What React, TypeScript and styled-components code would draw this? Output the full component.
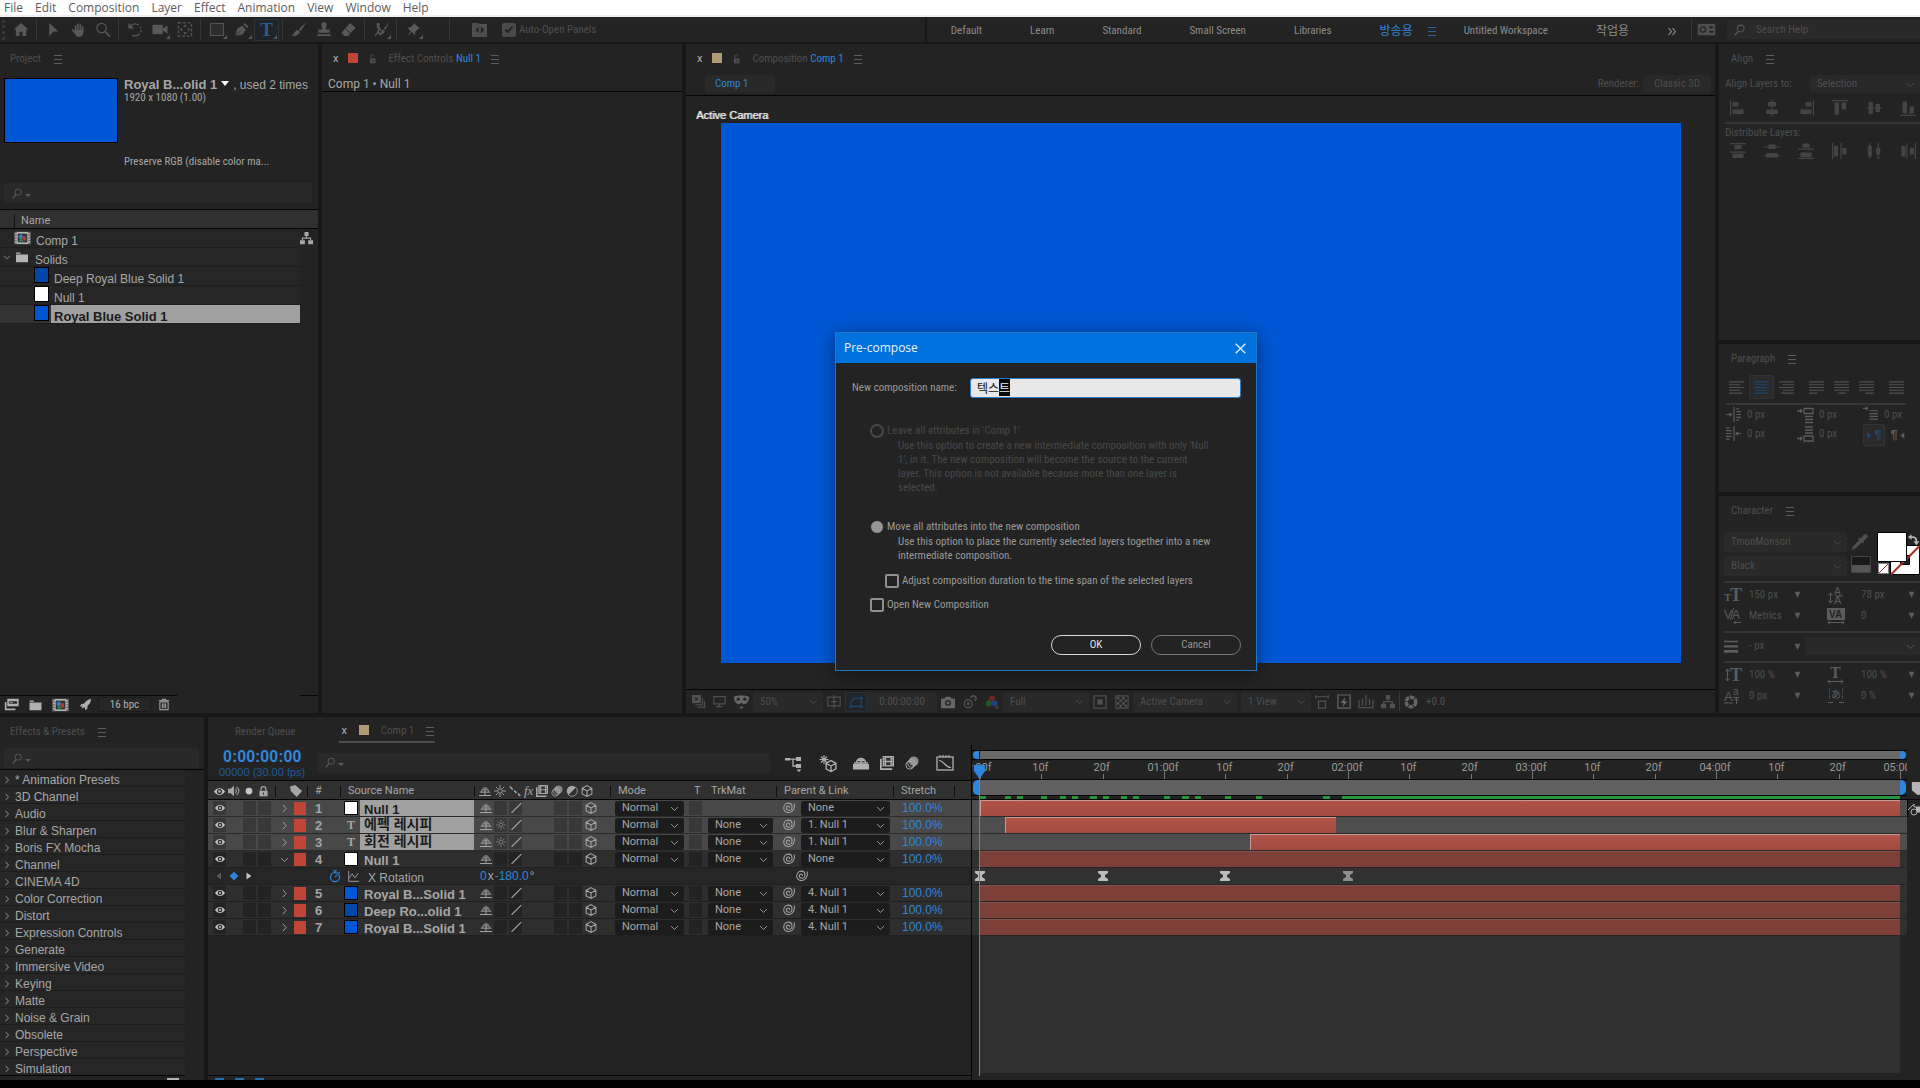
import React, { ReactNode, useEffect, useRef } from 'react';
import styled, { createGlobalStyle, css } from 'styled-components';

/* ---------- tokens ---------- */
const c = {
  panel: '#232323',
  gutter: '#171717',
  line: '#050505',
  field: '#292929',
  header: '#303030',
  text: '#a6a6a6',
  mid: '#8c8c8c',
  dim: '#4e4e4e',
  blue: '#2f86dc',
  deepBlue: '#205a98',
  solid: '#0057d5',
  label: '#bf4536',
};
const condensed = '"Roboto Condensed", Roboto, "Noto Sans CJK KR", sans-serif';
const ui = 'Roboto, "Noto Sans CJK KR", sans-serif';
const arial = '"Liberation Sans", "Noto Sans CJK KR", sans-serif';

const Global = createGlobalStyle`
  *, *::before, *::after { box-sizing: border-box; }
  body { margin: 0; background: #000; color: ${c.text}; font: 11px/14px ${condensed}; overflow: hidden; }
  button, input, select { font: inherit; color: inherit; margin: 0; padding: 0; border: 0; border-radius: 0; background: none; }
  ul { list-style: none; margin: 0; padding: 0; }
  h1, h2, p { margin: 0; font: inherit; }
`;

/* ---------- icons ---------- */
const Svg = styled.svg<{ $c?: string }>`
  display: block;
  flex: none;
  color: ${p => p.$c || 'inherit'};
  fill: currentColor;
  overflow: visible;
`;
const S = (d: string, w = 1) => <path d={d} fill="none" stroke="currentColor" strokeWidth={w} />;
const F = (d: string) => <path d={d} />;

const art: Record<string, ReactNode> = {
  home: F('M8 1l8 7h-2.500v7H9.500v-4.500h-3V15H2.500V8H0z'),
  arrow: F('M4 1l10 9H8.500L4 15z'),
  hand: <>{S('M5.500 9V3.500M8 8V1.500M10.500 8V2.500M13 9V4.500', 1.7)}{F('M4.700 8h9.100v3c0 3-2 5-4.500 5S6 15 5 13L1 8.500l1.200-1.200L4.700 9.500z')}</>,
  zoom: <><circle cx="6.500" cy="6.500" r="5" fill="none" stroke="currentColor" strokeWidth="1.300" />{S('M10 10l5.500 5.500', 1.8)}</>,
  rotate: <><path d="M3 4.500A6.500 6.500 0 0 1 14.500 8 6.500 6.500 0 0 1 5 14" fill="none" stroke="currentColor" strokeWidth="1.300" strokeDasharray="10 2 2 2 2 2" />{F('M1 1v6h6z')}</>,
  camera: <>{F('M0 3h11v10H0z')}{F('M11 7l5-3.500v9L11 9z')}</>,
  pan: <><rect x="1" y="1" width="14" height="14" fill="none" stroke="currentColor" strokeWidth="1.400" strokeDasharray="3 2" />{F('M8 2.500l2 2.500H6zM8 13.500L6 11h4zM2.500 8L5 6v4zM13.500 8L11 10V6z')}</>,
  rect: <rect x="1" y="1.500" width="14" height="13" fill="#2d2d2d" stroke="currentColor" />,
  pen: <>{F('M1 15l2-8 5-3 4 4-3 5zM9.500 2.500L11 1l4 4-1.500 1.500z')}{<path d="M1.500 14.500L6.500 9.500" stroke="#232323" />}</>,
  brush: F('M16 0L8 7.500 10 9.500zM7 8.500L9 10.500C8 14 4 15.500 0 15 3 13.500 3 9 7 8.500z'),
  stamp: F('M8 0a3 3 0 0 1 2.500 4.500L9.500 8H14v3.500H2V8h4.500l-1-3.500A3 3 0 0 1 8 0zM1 13h14v2H1z'),
  eraser: <>{F('M9 1l6 5-8 9H3l-3-3.500z')}<path d="M4.500 7.500l5 4.500" stroke="#232323" /></>,
  roto: <>{S('M4 2v0M3.500 6l2-1.500 1 3 2 2M5.500 7l-1 4-3 4M5 10l2 4', 1.5)}<circle cx="5" cy="2.500" r="1.800" />{F('M17 0l-6 7 1.500 1.500zM10.500 8l1.500 1.500c-1 3-3 4.500-6 4 2-1 2-4.500 4.500-5.500z')}</>,
  pin: F('M9 1l6 6-1.500.5-3 3-.5 3.500-3.500-3.500L1 15.500 5.500 9.500 2 6l3.500-.5 3-3z'),
  panel: <><path d="M0 1h7l1 1h8v14H0z" /><path d="M7 5v7L3.500 8.500zM9.500 5v7L13 8.500z" fill="#232323" /></>,
  guide: <><rect x="-2" y="1" width="20" height="13" /><circle cx="4" cy="7.500" r="3" fill="none" stroke="#232323" strokeWidth="1.500" /><path d="M11 5h5M11 10h5M13 3.500v3M14.500 8.500v3" stroke="#232323" strokeWidth="1.500" /></>,
  unlock: <>{F('M3 7h9v8H3z')}{S('M4.500 7V3.500a2.500 2.500 0 0 1 5 0', 1.5)}<path d="M7 9.500h1.500v3H7z" fill="#232323" /></>,
  lock: <>{F('M2 7h12v8H2z')}{S('M4.500 7V4.500a3.500 3.500 0 0 1 7 0V7', 1.8)}<path d="M7.200 9.500h1.600v3H7.200z" fill="#303030" /></>,
  search: <><circle cx="9" cy="6" r="4.500" fill="none" stroke="currentColor" strokeWidth="1.400" />{S('M6 9.500L1 15', 1.8)}</>,
  tree: <>{F('M5.500 0h5v5h-5zM0 10h6v5H0zM10 10h6v5h-6z')}{S('M8 5v3M3 10V7.500h10V10', 1.4)}</>,
  folder: F('M0 2h6v1.500H0zM0 4.500h16V15H0z'),
  comp: <><rect width="18" height="14" x="-1" y="1" fill="#b4b4b4" /><path d="M.5 1v14M15.500 1v14" stroke="#222" strokeWidth="1.200" strokeDasharray="1.500 1.500" /><rect x="2.500" y="3" width="11" height="10" fill="#333" /><circle cx="6" cy="6.500" r="2.500" fill="#2b82d0" /><rect x="8" y="6" width="4" height="5" fill="#b03a30" /><path d="M6 8l3 4H4z" fill="#2c8f5a" /></>,
  footage: <>{F('M4 1h14v9H4zM1 5h2v8h11v2H1z')}<path d="M6 4h10v3H6z" fill="#232323" />{F('M7 5h4v1H7z')}</>,
  rocket: F('M16 0c-4 0-7 3-9 6L3 7 1 10h4l-2 3 5-2v4l3-2 .5-4C14 7 16 4 16 0z'),
  trash: <>{S('M2.500 4.500h11V15h-11zM1 3h14M5.500 3V1h5v2M5.800 6.500v6.500M8 6.500v6.500M10.200 6.500v6.500', 1.3)}</>,
  eye: <><path d="M0 8c4-6.500 12-6.500 16 0-4 6.500-12 6.500-16 0z" /><circle cx="8" cy="8" r="3.700" fill="#2a2a2a" /><circle cx="8" cy="8" r="1.700" /></>,
  sound: <>{F('M0 5h3.500L8 1v14l-4.500-4H0z')}{S('M10 5c1.500 2 1.500 4 0 6M11.500 2.500c4 3 4 8 0 11', 1.4)}</>,
  dot: <circle cx="8" cy="8" r="4.500" />,
  tag: F('M0 2l7-2 9 8-7 8-8-8z'),
  shy: S('M0 14h16M8 5v9M1 9.500h14M3.500 9c0-7 9-7 9 0M5.500 6.500h5', 1.3),
  sun: <><circle cx="8" cy="8" r="3" fill="none" stroke="currentColor" strokeWidth="1.300" />{S('M8 0v4M8 12v4M0 8h4M12 8h4M2.500 2.500l2.500 2.500M11 11l2.500 2.500M13.500 2.500L11 5M5 11l-2.500 2.500', 1.2)}</>,
  quality: S('M1 2l4 4M7 7.500l3 3M12 11.500l3 3', 2),
  slash: S('M2 14.500L15 1.500', 1.6),
  film: <>{F('M0 3h2v11h12v2H0zM3 0h13v12H3z')}<path d="M5 1v10M14 1v10" stroke="#303030" strokeDasharray="1.500 1.500" /><path d="M7 2h5v3.500H7zM7 7h5v3.500H7z" fill="#303030" /></>,
  blur: <><circle cx="5.500" cy="10.500" r="4.500" fill="none" stroke="currentColor" /><circle cx="7.500" cy="8.500" r="4.500" fill="none" stroke="currentColor" /><circle cx="10" cy="6" r="5.500" opacity=".75" /></>,
  adjust: <><circle cx="8" cy="8" r="7" /><path d="M3 13L13 3a7 7 0 0 1-10 10z" fill="#303030" stroke="currentColor" /></>,
  cube: S('M8 .8l6.500 3.500v7.500L8 15.300 1.500 11.800V4.300zM1.500 4.300L8 8l6.500-3.700M8 8v7.300', 1.4),
  spiral: S('M15 2c1 6-1.500 11.500-7 12C3.500 14.500 1 11.500 1 8s2.500-6.500 6-6.500c3 0 5 2 5 5s-1.700 4.500-4.200 4.500C5.800 11 4.500 9.800 4.500 8S5.700 5.300 7 5.300 9 6.300 8.500 8', 1.4),
  down: S('M2 5.500l6 6 6-6', 1.6),
  right: S('M5 1.500L11 8l-6 6.500', 1.7),
  key: F('M8 1l7 7-7 7-7-7z'),
  prev: F('M12 1v14L3 8z'),
  next: F('M3 1v14l10-7z'),
  watch: <><circle cx="8" cy="9.500" r="6" fill="none" stroke="currentColor" strokeWidth="1.700" />{S('M8 9.500l3-3M5.500 1h5M8 1v2.500M12.500 4l2-1.500', 1.6)}</>,
  graph: S('M1 0v15h15M2 10l4-6 4 6 5-7', 1.3),
  net: <>{F('M0 3h5v2.500H0zM11 2h5v4h-5zM11 9h5v4h-5z')}{S('M5 4.200h6M8 4v7h3', 1.3)}{F('M11.500 14.500h5L14 17z')}</>,
  draft: <>{S('M5 0v9M.5 4.500h9M2 1.500l6 6M8 1.500l-6 6', 1.1)}<g transform="translate(6 5) scale(.75)">{S('M8 .8l6.500 3.500v7.500L8 15.300 1.500 11.800V4.300zM1.500 4.300L8 8l6.500-3.700M8 8v7.300', 1.8)}</g></>,
  hide: <>{F('M0 9h16v5.500H0z')}{S('M8 3v8M1 8h14M3.500 8c0-6 9-6 9 0M5 5.500h6', 1.4)}</>,
  graphEd: <><rect x="0" y="2" width="16" height="13" fill="none" stroke="currentColor" strokeWidth="1.300" />{S('M2 5.500c5 0 6 7 12 7M3 0v2M6 0v2M9 0v2M12 0v2', 1.2)}</>,
  monitor: S('M1 2h14v9H1zM8 11v3M4 14.300h8', 1.4),
  queue: <>{F('M0 0h11v10H0z')}<path d="M4 2.500v5L8 5z" fill="#232323" />{S('M13 4v8H4M15.500 7v8H7', 1.4)}</>,
  mask: <><path d="M0 3c3-2 13-2 16 0 0 6-3 8-5 8-1.500 0-2-1.500-3-1.500S6.500 11 5 11C3 11 0 9 0 3z" /><circle cx="4.500" cy="5.500" r="1.700" fill="#232323" /><circle cx="11.500" cy="5.500" r="1.700" fill="#232323" />{F('M5.500 13.500h5L8 16z')}</>,
  grid: S('M1 2.500h14v10H1zM8 0v15.500M4.500 7.500h7', 1.3),
  shape: <>{S('M2 13V9.500C3 5 6 3.500 9 3.500h5V13z', 1.3)}{F('M.5 11.500h3v3h-3zM12.500 11.500h3v3h-3zM12.500 2h3v3h-3z')}</>,
  photo: <>{F('M0 4h4l1.500-2h5L12 4h4v11H0z')}<circle cx="8" cy="9" r="3.300" fill="#232323" /><circle cx="8" cy="9" r="1.800" /></>,
  snap: <><circle cx="6" cy="10" r="4.500" fill="none" stroke="currentColor" strokeWidth="1.600" /><circle cx="6" cy="10" r="1.700" />{S('M9 3.500a3 3 0 1 1 4.500 3', 2)}</>,
  rgb: <><circle cx="8" cy="4" r="3.500" fill="#6d2622" /><circle cx="4.500" cy="9.500" r="3.500" fill="#23562c" /><circle cx="11" cy="9.500" r="3.500" fill="#24407c" />{F('M11 13.500h5L13.500 16z')}</>,
  roi: <>{S('M1 1h14v14H1z', 1.4)}{F('M5 5h6v6H5z')}</>,
  checker: <>{S('M1 1h14v14H1z', 1.2)}{F('M2 2h3v3H2zM8 2h3v3H8zM5 5h3v3H5zM11 5h3v3h-3zM2 8h3v3H2zM8 8h3v3H8zM5 11h3v3H5zM11 11h3v3h-3z')}</>,
  pixel: <>{S('M4 7h8v8H4zM0 2h16M1 0v4M15 0v4', 1.4)}</>,
  bolt: <>{S('M1 0h14v15H1z', 1.4)}{F('M10 2L4 9h3.500L6 14l6-7H8.500z')}</>,
  chart: <>{S('M0 6v8.500h16V6M4 4v8M8 0v12M12 4v8', 1.5)}</>,
  shutter: <><circle cx="8" cy="8" r="5.500" fill="none" stroke="currentColor" strokeWidth="4" strokeDasharray="5 1" /></>,
  alL: F('M0 0h1.200v16H0zM2.500 2h6v4.500h-6zM2.500 9.500h11V14h-11z'),
  alC: F('M7.400 0h1.200v16H7.400zM4 2h8v4.500H4zM2 9.500h12V14H2z'),
  alR: F('M14.800 0H16v16h-1.200zM7.500 2h6v4.500h-6zM2.500 9.500h11V14h-11z'),
  alT: F('M0 0h16v1.200H0zM2.500 2.500H7v12H2.500zM9.500 2.500H14v7H9.500z'),
  alM: F('M0 7.400h16v1.200H0zM2.500 2H7v12H2.500zM9.500 4H14v8H9.500z'),
  alB: F('M0 14.800h16V16H0zM2.500 1.500H7v12H2.500zM9.500 6.500H14v7H9.500z'),
  diT: F('M0 0h16v1.200H0zM4.500 2h7v4h-7zM0 8.500h16v1.200H0zM2.500 10.500h11v4.500h-11z'),
  diM: F('M0 3.200h16v1.200H0zM4.500 1.500h7v4.500h-7zM0 12h16v1.200H0zM2.500 10h11v4.500h-11z'),
  diB: F('M0 5.500h16v1.200H0zM4.500.5h7v4h-7zM0 14.800h16V16H0zM2.500 9.500h11V14h-11z'),
  diL: F('M0 0h1.200v16H0zM2 3h4v10.500H2zM8.500 0h1.200v16H8.500zM10.500 5h4v6.500h-4z'),
  diC: F('M3.200 0h1.200v16H3.200zM1.800 3h4v10.500h-4zM11.700 0h1.200v16h-1.200zM10.300 5h4v6.500h-4z'),
  diR: F('M6.200 0h1.200v16H6.200zM1.500 3h4v10.500h-4zM14.800 0H16v16h-1.200zM10 5h4v6.500h-4z'),
  txL: S('M0 2h16M0 5h12M0 8h16M0 11h12M0 14h14', 1.1),
  txC: S('M0 2h16M2 5h12M0 8h16M2 11h12M1 14h14', 1.1),
  txR: S('M0 2h16M4 5h12M0 8h16M4 11h12M2 14h14', 1.1),
  txJL: S('M0 2h16M0 5h16M0 8h16M0 11h16M0 14h9', 1.1),
  txJC: S('M0 2h16M0 5h16M0 8h16M0 11h16M4 14h8', 1.1),
  txJR: S('M0 2h16M0 5h16M0 8h16M0 11h16M7 14h9', 1.1),
  txJ: S('M0 2h16M0 5h16M0 8h16M0 11h16M0 14h16', 1.1),
  inL: <>{S('M0 8h5M8.500 0v16M11 2h3M11 5h5M11 8h5M11 11h5M11 14h3', 1.3)}{F('M3.500 5.500L7 8l-3.500 2.500z')}</>,
  inR: <>{S('M16 8h-5M8.500 0v16M0 2h4M0 5h6M0 8h6M0 11h6M0 14h4', 1.3)}{F('M13 5.500L9.500 8l3.500 2.500z')}</>,
  spB: <>{S('M0 4h4M7 1.500h9v5H7zM8 9.500h8M8 12.500h8M8 15.500h8', 1.3)}{F('M3 1.500L6 4 3 6.500z')}</>,
  spA: <>{S('M0 12.500h4M7 10h9v5H7zM8 1h8M8 4h8M8 7h8', 1.3)}{F('M3 10l3 2.500L3 15z')}</>,
  inF: <>{S('M0 1.500h4M7 4h9M7 7h9M7 10h9M7 13h9', 1.3)}{F('M3-1l3 2.500L3 4z')}</>,
  dropper: F('M15 1c1 1 1 3-1 4l-2 2 .5 1-1.500 1.500-1-1L4 14l-3 1.500L.5 15 2 12l5.500-5.500-1-1L8 4l1 .5 2-2c1-2 3-2.500 4-1.500z'),
  swap: <>{S('M4 3h3c4 0 5 2 5 7', 2.4)}{F('M5-1v8L0 3zM8 9h8l-4 6z')}</>,
  strokeW: F('M0 1.500h16v1.500H0zM0 6.500h16V9H0zM0 12h16v3H0z'),
  tri: F('M3 3h10L8 14z'),
  marker: F('M1 0h15v10l-6 6h-2L1 10z'),
  close: S('M1 1l14 14M15 1L1 15', 1.8),
  chevrons: S('M2 2l5 6-5 6M9 2l5 6-5 6', 2),
};

const Icon = ({ n, s = 14, h, color }: { n: string; s?: number; h?: number; color?: string }) => (
  <Svg width={s} height={h || s} viewBox="0 0 16 16" $c={color} aria-hidden="true">{art[n]}</Svg>
);

const BurgerLines = styled.span`
  width: 8px;
  height: 9px;
  flex: none;
  border-top: 1px solid currentColor;
  border-bottom: 1px solid currentColor;
  display: flex;
  align-items: center;
  &::before { content: ''; width: 100%; height: 1px; background: currentColor; }
`;
const IconButton = styled.button<{ $w?: number; $h?: number; $c?: string }>`
  width: ${p => (p.$w ? p.$w + 'px' : 'auto')};
  height: ${p => (p.$h ? p.$h + 'px' : 'auto')};
  color: ${p => p.$c || 'inherit'};
  display: flex;
  align-items: center;
  justify-content: center;
  flex: none;
`;
const Burger = ({ label }: { label: string }) => <IconButton aria-label={label} $c="#5c5c5c"><BurgerLines /></IconButton>;

/* ---------- shared parts ---------- */
const Panel = styled.section`
  background: ${c.panel};
  min-width: 0;
  min-height: 0;
  overflow: hidden;
  display: flex;
  flex-direction: column;
`;
const PanelTabs = styled.header<{ $pad?: number; $gap?: number }>`
  height: 28px;
  flex: none;
  display: flex;
  align-items: center;
  padding-top: 2px;
  padding-left: ${p => p.$pad ?? 10}px;
  gap: ${p => p.$gap ?? 13}px;
  color: ${c.dim};
  white-space: nowrap;
`;
const TabSwatch = styled.span<{ $c: string }>`
  width: 10px;
  height: 10px;
  background: ${p => p.$c};
  flex: none;
  margin-bottom: 2px;
`;
const Accent = styled.span`color: ${c.blue};`;
const Field = styled.label<{ $w?: string; $h?: number }>`
  display: flex;
  align-items: center;
  gap: 2px;
  width: ${p => p.$w || 'auto'};
  height: ${p => p.$h || 20}px;
  padding-left: 8px;
  background: ${c.field};
  color: #5a5a5a;
  border-radius: 2px;
  input { flex: 1; min-width: 0; height: 100%; outline: 0; }
  input::placeholder { color: ${c.dim}; opacity: 1; }
`;
const DropTip = styled.span`
  border: 3px solid transparent;
  border-top-color: currentColor;
  margin-top: 7px;
  width: 0;
  height: 0;
`;
const Search = ({ label, w, h }: { label: string; w?: string; h?: number }) => (
  <Field $w={w} $h={h}>
    <Icon n="search" s={11} /><DropTip />
    <input aria-label={label} />
  </Field>
);

const Drop = styled.span<{ $w?: number; $h: number; $bg: string; $c: string; $pad: number; $font?: string }>`
  position: relative;
  display: flex;
  align-items: center;
  flex: ${p => (p.$w ? 'none' : '1')};
  width: ${p => (p.$w ? p.$w + 'px' : 'auto')};
  min-width: 0;
  height: ${p => p.$h}px;
  background: ${p => p.$bg};
  color: ${p => p.$c};
  border-radius: 2px;
  select {
    appearance: none;
    width: 100%;
    height: 100%;
    padding-left: ${p => p.$pad}px;
    font-family: ${p => p.$font || condensed};
    outline: 0;
  }
  option { color: #ddd; background: #222; }
  svg { position: absolute; right: 5px; pointer-events: none; }
`;
const Select = ({ label, value, options = [], w, h = 18, bg = c.field, color = c.dim, pad = 7, font }: {
  label: string; value: string; options?: string[]; w?: number; h?: number; bg?: string; color?: string; pad?: number; font?: string;
}) => (
  <Drop $w={w} $h={h} $bg={bg} $c={color} $pad={pad} $font={font}>
    <select aria-label={label} defaultValue={value}>
      {[value, ...options].map(o => <option key={o}>{o}</option>)}
    </select>
    <Icon n="down" s={9} />
  </Drop>
);

/* ---------- menu and toolbar ---------- */
const App_ = styled.div`
  height: 100vh;
  display: grid;
  grid-template-rows: 17px 27px minmax(0, 1fr) 367px 8px;
  background: ${c.gutter};
  position: relative;
  overflow: hidden;
`;
const MenuBar = styled.nav`
  background: #fff;
  border-bottom: 2px solid #f0f0f0;
  display: flex;
  align-items: center;
  gap: 12px;
  padding-left: 4px;
  font: 12px/14px "Open Sans", sans-serif;
  color: #5c5c5c;
  button { line-height: 14px; height: 14px; }
`;
const ToolBar = styled.div`
  background: ${c.panel};
  border-bottom: 2px solid ${c.gutter};
  display: flex;
  align-items: center;
  color: ${c.dim};
  white-space: nowrap;
`;
const Tools = styled.div`
  flex: 1;
  min-width: 0;
  display: flex;
  align-items: center;
  align-self: stretch;
  border-right: 2px solid ${c.gutter};
  overflow: hidden;
`;
const Grip = styled.span`
  width: 3px;
  height: 20px;
  margin: 0 3px 0 2px;
  border-left: 3px dotted #363636;
`;
const Tool = styled.button<{ $on?: boolean; $fly?: boolean }>`
  width: 25px;
  height: 22px;
  flex: none;
  position: relative;
  display: flex;
  align-items: center;
  justify-content: center;
  color: ${p => (p.$on ? '#265b8c' : '#585858')};
  ${p => p.$on && css`background: #1f2429; box-shadow: inset 0 0 0 1px #2b333b;`}
  &::after {
    content: '';
    display: ${p => (p.$fly ? 'block' : 'none')};
    position: absolute;
    right: 2px;
    bottom: 2px;
    border: 2px solid;
    border-color: transparent #585858 #585858 transparent;
  }
`;
const Letter = styled.span`font: bold 19px/20px "Liberation Serif", serif;`;
const Sep = styled.span<{ $l?: number; $r?: number }>`
  width: 1px;
  align-self: stretch;
  background: #383838;
  flex: none;
  margin: 2px ${p => p.$r ?? 3}px 2px ${p => p.$l ?? 3}px;
`;
const TickLabel = styled.label`
  display: flex;
  align-items: center;
  gap: 3px;
  margin-left: 15px;
`;
const Tick = styled.input<{ $fill?: boolean }>`
  appearance: none;
  width: 14px;
  height: 14px;
  flex: none;
  border: 2px solid #8f8f8f !important;
  border-radius: 2px !important;
  ${p => p.$fill && css`
    background: #4a4a4a !important;
    border-color: #4a4a4a !important;
    display: grid;
    place-items: center;
    &::before { content: ''; width: 8px; height: 4px; border: solid #232323; border-width: 0 0 2px 2px; transform: rotate(-45deg); margin-top: -2px; }
  `}
`;
const Workspaces = styled.div`
  display: flex;
  align-items: center;
  padding-top: 3px;
  color: ${c.mid};
`;
const Workspace = styled.button<{ $on?: boolean; $kr?: boolean }>`
  padding: 0 ${p => (p.$on ? 11 : 24)}px 0 24px;
  color: ${p => (p.$on ? c.blue : 'inherit')};
  font-size: ${p => (p.$kr ? 12 : 11)}px;
`;
const HelpSearch = styled.div`
  width: 193px;
  margin-left: 13px;
  label { gap: 10px; border-radius: 2px 0 0 2px; padding-left: 7px; }
`;

const toolGroups: { n: string; fly?: boolean; on?: boolean }[][] = [
  [{ n: 'home' }],
  [{ n: 'arrow' }, { n: 'hand' }, { n: 'zoom' }],
  [{ n: 'rotate' }, { n: 'camera', fly: true }, { n: 'pan' }],
  [{ n: 'rect', fly: true }, { n: 'pen', fly: true }, { n: 'type', on: true, fly: true }],
  [{ n: 'brush' }, { n: 'stamp' }, { n: 'eraser' }],
  [{ n: 'roto', fly: true }],
  [{ n: 'pin', fly: true }],
];

const Top = () => (
  <>
    <MenuBar>
      {['File', 'Edit', 'Composition', 'Layer', 'Effect', 'Animation', 'View', 'Window', 'Help'].map(m => <button key={m}>{m}</button>)}
    </MenuBar>
    <ToolBar>
      <Tools>
        <Grip />
        {toolGroups.map((g, i) => (
          <React.Fragment key={i}>
            {i > 0 && <Sep />}
            {g.map(t => (
              <Tool key={t.n} $on={t.on} $fly={t.fly} aria-label={t.n}>
                {t.n === 'type' ? <Letter>T</Letter> : <Icon n={t.n} s={16} h={15} />}
              </Tool>
            ))}
          </React.Fragment>
        ))}
        <Sep $l={24} $r={22} />
        <Icon n="panel" s={15} />
        <TickLabel><Tick type="checkbox" $fill defaultChecked />Auto-Open Panels</TickLabel>
      </Tools>
      <Workspaces>
        {['Default', 'Learn', 'Standard', 'Small Screen', 'Libraries'].map(w => <Workspace key={w}>{w}</Workspace>)}
        <Workspace $on $kr>방송용</Workspace>
        <IconButton aria-label="Workspace menu" $w={16} $c="#28639f"><BurgerLines /></IconButton>
        <Workspace>Untitled Workspace</Workspace>
        <Workspace $kr>작업용</Workspace>
        <IconButton aria-label="More workspaces" $w={38}><Icon n="chevrons" s={12} h={9} /></IconButton>
      </Workspaces>
      <Sep $l={0} $r={7} />
      <Icon n="guide" s={15} h={14} />
      <HelpSearch>
        <Field $h={19}><Icon n="search" s={12} /><input aria-label="Search Help" placeholder="Search Help" /></Field>
      </HelpSearch>
    </ToolBar>
  </>
);

/* ---------- project panel ---------- */
const ProjectInfo = styled.div`
  display: flex;
  gap: 6px;
  height: 111px;
  padding: 6px 0 0 4px;
`;
const Thumb = styled.div`
  width: 114px;
  height: 65px;
  flex: none;
  background: ${c.solid};
  border: 1px solid #000;
`;
const InfoText = styled.div`
  display: flex;
  flex-direction: column;
  height: 91px;
  padding-top: 1px;
  white-space: nowrap;
`;
const InfoTitle = styled.h2`
  display: flex;
  align-items: center;
  gap: 4px;
  height: 12px;
  font: 12px/14px ${arial};
  b { font-size: 13px; }
`;
const WhiteTip = styled.span`
  border: 4px solid transparent;
  border-top: 5px solid #fff;
  border-bottom: 0;
  margin-bottom: 4px;
`;
const LastLine = styled.span`margin-top: auto;`;
const SearchWrap = styled.div<{ $r: number; $b: number; $t?: number }>`
  padding: ${p => p.$t || 0}px ${p => p.$r}px ${p => p.$b}px 4px;
`;
const ListHead = styled.div`
  height: 20px;
  border-top: 1px solid ${c.line};
  border-bottom: 1px solid ${c.line};
  background: ${c.header};
  display: flex;
  align-items: center;
  padding: 3px 0 0 14px;
  font: 11px/14px ${ui};
  span { border-left: 1px solid #111; padding-left: 6px; }
`;
const Tree = styled.ul`
  flex: 1;
  min-height: 0;
  font: 12px/14px ${arial};
`;
const TreeRow = styled.li<{ $depth: number; $on?: boolean }>`
  height: 19px;
  display: flex;
  align-items: stretch;
  margin-right: 18px;
  border-bottom: 1px solid #1d1d1d;
  background: ${p => (p.$on ? '#333' : '#262626')};
  padding-left: ${p => (p.$depth ? 34 : 2)}px;
  gap: 2px;
  > svg, > button { align-self: center; }
`;
const Twisty = styled.span`
  width: 10px;
  display: flex;
  align-items: center;
  justify-content: center;
`;
const Swatch = styled.span<{ $c: string }>`
  width: 15px;
  height: 16px;
  flex: none;
  border: 1px solid #000;
  background: ${p => p.$c};
`;
const TreeName = styled.span<{ $on?: boolean }>`
  flex: 1;
  padding: 5px 0 0 3px;
  line-height: 14px;
  ${p => p.$on && css`background: #a0a0a0; color: #1c1c1c; font-weight: bold; font-size: 13px;`}
`;
const RowEnd = styled.span`
  width: 0;
  align-self: center;
  overflow: visible;
  padding-left: 2px;
`;
const PFoot = styled.footer`
  height: 18px;
  flex: none;
  display: flex;
  justify-content: space-between;
  &::after { content: ''; width: 18px; border-top: 1px solid ${c.line}; }
`;
const PFootTools = styled.div`
  width: 177px;
  border-top: 1px solid ${c.line};
  display: flex;
  align-items: center;
  gap: 10px;
  padding-left: 2px;
  color: #b0b0b0;
`;
const Depth = styled.button`
  width: 53px;
  height: 15px;
  border: 1px solid #1b1b1b;
  background: #262626;
  border-radius: 2px;
  margin: 0 -3px;
  line-height: 12px;
`;

const Project = () => (
  <Panel>
    <PanelTabs>Project<Burger label="Project menu" /></PanelTabs>
    <ProjectInfo>
      <Thumb />
      <InfoText>
        <InfoTitle><b>Royal B...olid 1</b><WhiteTip /><span>, used 2 times</span></InfoTitle>
        <span>1920 x 1080 (1.00)</span>
        <LastLine>Preserve RGB (disable color ma...</LastLine>
      </InfoText>
    </ProjectInfo>
    <SearchWrap $r={6} $b={6}><Search label="Search project" /></SearchWrap>
    <ListHead><span>Name</span></ListHead>
    <Tree>
      <TreeRow $depth={0}><Twisty /><Icon n="comp" s={17} h={14} /><TreeName>Comp 1</TreeName><RowEnd><Icon n="tree" s={13} /></RowEnd></TreeRow>
      <TreeRow $depth={0}><Twisty><Icon n="down" s={8} /></Twisty><Icon n="folder" s={16} h={12} color="#b4b4b4" /><TreeName>Solids</TreeName></TreeRow>
      <TreeRow $depth={1}><Swatch $c="#0047a8" /><TreeName>Deep Royal Blue Solid 1</TreeName></TreeRow>
      <TreeRow $depth={1}><Swatch $c="#fff" /><TreeName>Null 1</TreeName></TreeRow>
      <TreeRow $depth={1} $on><Swatch $c={c.solid} /><TreeName $on>Royal Blue Solid 1</TreeName></TreeRow>
    </Tree>
    <PFoot>
      <PFootTools>
        <IconButton aria-label="Interpret footage"><Icon n="footage" s={17} h={13} /></IconButton>
        <IconButton aria-label="New folder"><Icon n="folder" s={13} h={12} /></IconButton>
        <IconButton aria-label="New composition"><Icon n="comp" s={17} h={14} /></IconButton>
        <IconButton aria-label="Project settings"><Icon n="rocket" s={12} /></IconButton>
        <Depth>16 bpc</Depth>
        <IconButton aria-label="Delete"><Icon n="trash" s={12} h={13} /></IconButton>
      </PFootTools>
    </PFoot>
  </Panel>
);

/* ---------- effect controls / composition ---------- */
const CloseX = styled.button`
  font: 11px/12px ${ui};
  color: #b4b4b4;
`;
const LayerPath = styled.div`
  height: 20px;
  padding: 5px 0 0 6px;
  border-bottom: 1px solid ${c.line};
  font: 12px/14px ${ui};
`;
const EffectControls = () => (
  <Panel>
    <PanelTabs $pad={11} $gap={10}>
      <CloseX>x</CloseX><TabSwatch $c={c.label} /><Icon n="unlock" s={10} h={12} />
      <span>Effect Controls <Accent>Null 1</Accent></span><Burger label="Effect Controls menu" />
    </PanelTabs>
    <LayerPath>Comp 1 • Null 1</LayerPath>
  </Panel>
);

const CompBar = styled.div`
  height: 24px;
  flex: none;
  display: flex;
  align-items: center;
  padding: 0 4px 0 19px;
  gap: 4px;
  border-bottom: 1px solid ${c.line};
  color: ${c.dim};
`;
const Chip = styled.button<{ $w: number; $on?: boolean }>`
  width: ${p => p.$w}px;
  height: 18px;
  background: ${c.field};
  border-radius: 2px;
  color: ${p => (p.$on ? c.blue : c.dim)};
  text-align: ${p => (p.$on ? 'left' : 'center')};
  padding-left: ${p => (p.$on ? 10 : 0)}px;
  margin-right: ${p => (p.$on ? 'auto' : 0)};
`;
const Stage = styled.div`
  flex: 1;
  min-height: 0;
  position: relative;
  display: flex;
  align-items: center;
  justify-content: center;
  overflow: hidden;
`;
const Frame = styled.div`
  width: 960px;
  height: 540px;
  flex: none;
  background: ${c.solid};
`;
const CameraName = styled.span`
  position: absolute;
  left: 10px;
  top: 12px;
  color: #e8e8e8;
  font: 11px/14px ${arial};
  text-shadow: 1px 0 0 #b8b8b8;
`;
const ViewBar = styled.footer`
  height: 24px;
  flex: none;
  display: flex;
  align-items: center;
  gap: 4px;
  padding-left: 6px;
  border-top: 1px solid ${c.line};
  color: #505050;
  white-space: nowrap;
`;
const IconSet = styled.div`
  display: flex;
  align-items: center;
  gap: 8px;
`;
const GuideSet = styled.div`
  display: flex;
  align-items: center;
`;
const Blueish = styled.span`
  width: 22px;
  height: 20px;
  display: flex;
  align-items: center;
  justify-content: center;
  background: #20252b;
  color: #1f446b;
  border: 1px solid #2a3037;
`;
const TimeBox = styled.button`
  width: 70px;
  height: 20px;
  background: ${c.field};
`;
const Composition = () => (
  <Panel>
    <PanelTabs $pad={11} $gap={10}>
      <CloseX>x</CloseX><TabSwatch $c="#b09b76" /><Icon n="unlock" s={10} h={12} />
      <span>Composition <Accent>Comp 1</Accent></span><Burger label="Composition menu" />
    </PanelTabs>
    <CompBar>
      <Chip $w={70} $on>Comp 1</Chip>Renderer:<Chip $w={68}>Classic 3D</Chip>
    </CompBar>
    <Stage><CameraName>Active Camera</CameraName><Frame /></Stage>
    <ViewBar>
      <IconSet><Icon n="queue" s={13} /><Icon n="monitor" s={13} /><Icon n="mask" s={15} color="#666" /></IconSet>
      <Select label="Magnification" value="50%" w={70} h={20} options={['100%']} />
      <Icon n="grid" s={14} />
      <GuideSet><Blueish><Icon n="shape" s={14} /></Blueish><TimeBox>0:00:00:00</TimeBox></GuideSet>
      <IconSet><Icon n="photo" s={14} color="#666" /><Icon n="snap" s={14} /><Icon n="rgb" s={14} /></IconSet>
      <Select label="Resolution" value="Full" w={86} h={20} options={['Half']} />
      <IconSet><Icon n="roi" s={14} /><Icon n="checker" s={14} /></IconSet>
      <Select label="Camera view" value="Active Camera" w={104} h={20} options={['Front']} />
      <Select label="View layout" value="1 View" w={70} h={20} options={['2 Views']} />
      <IconSet><Icon n="pixel" s={14} /><Icon n="bolt" s={14} color="#666" /><Icon n="chart" s={14} /><Icon n="tree" s={14} /></IconSet>
      <Sep $l={0} $r={0} />
      <IconSet><Icon n="shutter" s={14} color="#666" /><span>+0.0</span></IconSet>
    </ViewBar>
  </Panel>
);

/* ---------- right column ---------- */
const RightColumn = styled.div`
  display: grid;
  grid-template-rows: 296px 148px minmax(0, 1fr);
  gap: 4px;
  min-width: 0;
  min-height: 0;
`;
const AlignTo = styled.label`
  display: flex;
  align-items: center;
  padding: 3px 0 0 6px;
  gap: 18px;
  color: ${c.dim};
  white-space: nowrap;
`;
const IconGrid = styled.div`
  display: flex;
  padding: 5px 0 4px 2px;
  color: #444;
`;
const Rule = styled.hr<{ $l?: number; $r?: number }>`
  height: 2px;
  flex: none;
  border: 0;
  background: #363636;
  margin: 0 ${p => p.$r || 0}px 0 ${p => p.$l || 6}px;
`;
const DimLabel = styled.p`
  color: ${c.dim};
  padding: 2px 0 0 6px;
  height: 14px;
`;
const ParaButtons = styled.div`
  display: flex;
  gap: 5px;
  padding: 3px 0 4px 5px;
  color: #505050;
  > div { display: flex; }
`;
const ParaButton = styled.button<{ $on?: boolean }>`
  width: 25px;
  height: 24px;
  display: flex;
  align-items: center;
  justify-content: center;
  ${p => p.$on && css`color: #1f4670; background: #2a2a2a; border: 1px solid #333; border-radius: 2px;`}
`;
const Indents = styled.div`
  display: grid;
  grid-template-columns: 71px 66px 1fr;
  grid-auto-rows: 19px;
  padding-left: 7px;
  color: #5c5c5c;
`;
const Measure = styled.span`
  display: flex;
  align-items: center;
  gap: 6px;
  color: ${c.dim};
  svg { color: #5c5c5c; }
`;
const Directions = styled.span`
  display: flex;
  gap: 2px;
`;
const Pilcrow = styled.button<{ $on?: boolean }>`
  width: 22px;
  height: 22px;
  display: flex;
  align-items: center;
  justify-content: center;
  gap: 1px;
  font: bold 13px/14px ${arial};
  color: ${p => (p.$on ? '#1f4670' : '#5c5c5c')};
  ${p => p.$on && css`background: #2a2a2a; border: 1px solid #333; border-radius: 2px;`}
  svg { color: inherit; }
`;
const CharTop = styled.div`
  display: grid;
  grid-template-columns: 123px 22px 1fr;
  gap: 4px;
  padding: 8px 0 5px 5px;
  > div { display: flex; flex-direction: column; gap: 4px; }
`;
const Duo = styled.span`
  width: 20px;
  height: 17px;
  border: 1px solid #444;
  background: linear-gradient(#1a1a1a 50%, #555 50%);
`;
const CharGrid = styled.div`
  display: grid;
  grid-template-columns: 25px 44px 34px 34px 46px 1fr;
  grid-auto-rows: 21px;
  align-items: center;
  padding: 1px 0 5px 5px;
  color: ${c.dim};
  svg { color: #5c5c5c; }
`;
const StrokeRow = styled.div`
  display: grid;
  grid-template-columns: 25px 44px 12px 1fr;
  align-items: center;
  padding: 4px 0 6px 5px;
  color: ${c.dim};
  svg { color: #5c5c5c; }
`;
const TextGlyph = ({ children }: { children: ReactNode }) => (
  <Svg width={18} height={18} viewBox="0 0 18 18" aria-hidden="true">{children}</Svg>
);
const sansB = { fontFamily: 'Liberation Sans', fontSize: 11 } as const;
const serifB = { fontFamily: 'Liberation Serif', fontWeight: 700 } as const;
const ln = { stroke: 'currentColor', fill: 'none' } as const;

const Right = () => (
  <RightColumn>
    <Panel>
      <PanelTabs $pad={12}>Align<Burger label="Align menu" /></PanelTabs>
      <AlignTo>Align Layers to:<Select label="Align Layers to" value="Selection" options={['Composition']} /></AlignTo>
      <IconGrid>{['alL', 'alC', 'alR', 'alT', 'alM', 'alB'].map(n => <IconButton key={n} $w={34} $h={20} aria-label={n}><Icon n={n} s={16} /></IconButton>)}</IconGrid>
      <Rule />
      <DimLabel>Distribute Layers:</DimLabel>
      <IconGrid>{['diT', 'diM', 'diB', 'diL', 'diC', 'diR'].map(n => <IconButton key={n} $w={34} $h={16} aria-label={n}><Icon n={n} s={16} /></IconButton>)}</IconGrid>
    </Panel>
    <Panel>
      <PanelTabs $pad={12}>Paragraph<Burger label="Paragraph menu" /></PanelTabs>
      <ParaButtons>
        <div><ParaButton aria-label="Left"><Icon n="txL" s={15} /></ParaButton><ParaButton $on aria-label="Center"><Icon n="txC" s={15} /></ParaButton><ParaButton aria-label="Right"><Icon n="txR" s={15} /></ParaButton></div>
        <div>{['txJL', 'txJC', 'txJR'].map(n => <ParaButton key={n} aria-label={n}><Icon n={n} s={15} /></ParaButton>)}</div>
        <div><ParaButton aria-label="Justify all"><Icon n="txJ" s={15} /></ParaButton></div>
      </ParaButtons>
      <Rule $l={7} $r={14} />
      <Indents>
        <Measure><Icon n="inL" s={15} />0 px</Measure><Measure><Icon n="spB" s={16} />0 px</Measure><Measure><Icon n="inF" s={15} />0 px</Measure>
        <Measure><Icon n="inR" s={15} />0 px</Measure><Measure><Icon n="spA" s={16} />0 px</Measure>
        <Directions><Pilcrow $on aria-label="Left to right"><Icon n="next" s={7} h={9} />¶</Pilcrow><Pilcrow aria-label="Right to left">¶<Icon n="prev" s={7} h={9} /></Pilcrow></Directions>
      </Indents>
    </Panel>
    <Panel>
      <PanelTabs $pad={12}>Character<Burger label="Character menu" /></PanelTabs>
      <CharTop>
        <div>
          <Drop $h={20} $bg={c.field} $c={c.dim} $pad={7}><select aria-label="Font family"><option>TmonMonsori</option></select><Icon n="down" s={9} /></Drop>
          <Drop $h={20} $bg={c.field} $c={c.dim} $pad={7}><select aria-label="Font style"><option>Black</option></select><Icon n="down" s={9} /></Drop>
        </div>
        <div><Icon n="dropper" s={17} h={20} color={c.dim} /><Duo /></div>
        <Svg width={44} height={44} viewBox="0 0 44 44" aria-hidden="true">
          <path d="M13.500 13.500h29v29h-29z" fill="#fff" stroke="#000" />
          <path d="M23.500 23.500h9v9h-9z" fill="#232323" stroke="#000" />
          <path d="M14 42.500L42.500 14" stroke="#a82c20" strokeWidth="2" />
          <path d="M.5.5h29v29H.5z" fill="#fff" stroke="#000" />
          <path d="M1.500 31.500h10v10h-10z" fill="#fff" stroke="#888" />
          <path d="M2 41L11 32" stroke="#a82c20" />
          <g transform="translate(31 3) scale(.7)" color="#b4b4b4" fill="#b4b4b4">{art.swap}</g>
        </Svg>
      </CharTop>
      <Rule $l={5} />
      <CharGrid>
        <TextGlyph><text x="0" y="15" {...serifB} fontSize="11">T</text><text x="6" y="15" {...serifB} fontSize="18">T</text></TextGlyph>
        <span>150 px</span><Icon n="tri" s={9} />
        <TextGlyph><text x="7" y="9" {...sansB} fontSize="10">A</text><text x="7" y="18" {...sansB}>A</text><path {...ln} d="M3.500 7v10M1.500 9.500l2-2.500 2 2.500M1.500 14.500l2 2.500 2-2.500M8 10h8" /></TextGlyph>
        <span>78 px</span><Icon n="tri" s={9} />
        <TextGlyph><text x="0" y="12" {...sansB} fontSize="12">V</text><text x="8" y="12" {...sansB} fontSize="12">A</text><path {...ln} d="M9.500 1l-3 12M10 15.500h7M12 13.500l-2 2 2 2" /></TextGlyph>
        <span>Metrics</span><Icon n="tri" s={9} />
        <TextGlyph><path d="M0 1h18v12H0z" /><text x="2" y="11" {...sansB} fontWeight="700" fontSize="10" fill="#232323">VA</text><path {...ln} d="M1 15.500h16M3 13.500l-2 2 2 2M15 13.500l2 2-2 2" /></TextGlyph>
        <span>0</span><Icon n="tri" s={9} />
      </CharGrid>
      <Rule $l={5} />
      <StrokeRow><Icon n="strokeW" s={14} h={15} /><span>- px</span><Icon n="tri" s={9} /><Select label="Stroke order" value=" " options={['Fill Over Stroke']} /></StrokeRow>
      <Rule $l={5} />
      <CharGrid>
        <TextGlyph><text x="6" y="15" {...serifB} fontSize="18">T</text><path {...ln} d="M3.500 3v12M1.500 5.500l2-2.500 2 2.500M1.500 12.500l2 2.500 2-2.500" /></TextGlyph>
        <span>100 %</span><Icon n="tri" s={9} />
        <TextGlyph><text x="3" y="12" {...serifB} fontSize="16">T</text><path {...ln} d="M1 15.500h15M3 13.500l-2 2 2 2M14 13.500l2 2-2 2" /></TextGlyph>
        <span>100 %</span><Icon n="tri" s={9} />
        <TextGlyph><text x="0" y="14" {...sansB} fontSize="13">A</text><text x="9" y="8" {...sansB} fontSize="10">a</text><path {...ln} d="M0 16h9M9 10.500h6M12.500 11v6M10.500 13.500l2-2 2 2" /></TextGlyph>
        <span>0 px</span><Icon n="tri" s={9} />
        <TextGlyph><text x="4" y="11" fontFamily="Noto Sans CJK JP" fontSize="10">あ</text><path {...ln} strokeDasharray="1 1" d="M2.500 1v12M15.500 1v12" /><path {...ln} d="M1 15.500h5M12 15.500h5" /></TextGlyph>
        <span>0 %</span><Icon n="tri" s={9} />
      </CharGrid>
    </Panel>
  </RightColumn>
);

/* ---------- effects & presets ---------- */
const EffectList = styled.ul`
  flex: 1;
  min-height: 0;
  overflow: hidden;
  border-top: 1px solid ${c.line};
  font: 12px/14px ${arial};
`;
const EffectRow = styled.li`
  height: 17px;
  margin-right: 19px;
  background: #262626;
  border-bottom: 1px solid #1c1c1c;
  button { display: flex; align-items: center; gap: 4px; padding: 3px 0 0 3px; white-space: nowrap; }
`;
const EffectFoot = styled.footer`
  height: 5px;
  width: 185px;
  flex: none;
  border-top: 1px solid ${c.line};
  padding: 2px 6px 0 0;
  display: flex;
  justify-content: flex-end;
  span { width: 12px; background: #b4b4b4; }
`;
const effects = ['* Animation Presets', '3D Channel', 'Audio', 'Blur & Sharpen', 'Boris FX Mocha', 'Channel', 'CINEMA 4D', 'Color Correction', 'Distort', 'Expression Controls', 'Generate', 'Immersive Video', 'Keying', 'Matte', 'Noise & Grain', 'Obsolete', 'Perspective', 'Simulation'];
const Effects = () => (
  <Panel>
    <PanelTabs>Effects &amp; Presets<Burger label="Effects menu" /></PanelTabs>
    <SearchWrap $t={3} $r={5} $b={1}><Search label="Search effects" /></SearchWrap>
    <EffectList>{effects.map(e => <EffectRow key={e}><button><Icon n="right" s={8} />{e}</button></EffectRow>)}</EffectList>
    <EffectFoot><span /></EffectFoot>
  </Panel>
);

/* ---------- timeline ---------- */
const TimeTabs = styled(PanelTabs)`
  padding-left: 27px;
  gap: 44px;
`;
const OpenTab = styled.div`
  display: flex;
  align-items: center;
  align-self: stretch;
  gap: 12px;
  padding: 2px 1px 0 2px;
  border-bottom: 2px solid #4d4d4d;
  margin-bottom: 2px;
`;
const TimeBody = styled.div`
  flex: 1;
  min-height: 0;
  display: flex;
`;
const LayerSide = styled.div`
  width: 763px;
  flex: none;
  display: flex;
  flex-direction: column;
`;
const TimeCtl = styled.div`
  height: 35px;
  flex: none;
  display: flex;
  align-items: center;
  padding-left: 11px;
`;
const TimeCode = styled.div`
  width: 98px;
  color: ${c.blue};
  font: bold 16px/18px ${arial};
  padding-left: 4px;
  small { display: block; margin-left: -4px; font: 11px/12px ${arial}; color: ${c.deepBlue}; white-space: nowrap; }
`;
const CtlIcons = styled.div<{ $gap: number; $pad?: number }>`
  display: flex;
  gap: ${p => p.$gap}px;
  padding-left: ${p => p.$pad || 0}px;
  align-items: center;
  color: #b0b0b0;
`;
const LayerTable = styled.table`
  table-layout: fixed;
  width: 763px;
  border-collapse: separate;
  border-spacing: 0;
  border-top: 1px solid ${c.line};
  font: 11px/14px ${ui};
  th, td { padding: 0; text-align: left; font-weight: normal; }
  th { height: 19px; background: ${c.header}; border-bottom: 1px solid ${c.line}; }
`;
const HeadCell = styled.div<{ $pad?: number; $gap?: number; $div?: boolean }>`
  height: 18px;
  display: flex;
  align-items: center;
  padding-top: 2px;
  padding-left: ${p => p.$pad ?? 6}px;
  gap: ${p => p.$gap || 0}px;
  white-space: nowrap;
  position: relative;
  &::after {
    content: '';
    display: ${p => (p.$div === false ? 'none' : 'block')};
    position: absolute;
    right: 1px;
    height: 11px;
    border-right: 1px solid #0e0e0e;
  }
`;
const Row = styled.tr<{ $kind: 'on' | 'off' | 'prop' }>`
  td {
    height: 17px;
    border-bottom: 1px solid ${p => (p.$kind === 'on' ? '#2a2a2a' : '#1f1f1f')};
    background: ${p => ({ on: '#484848', off: '#2e2e2e', prop: '#262626' }[p.$kind])};
  }
`;
const Cell = styled.div<{ $pad?: number; $gap?: number }>`
  height: 16px;
  display: flex;
  align-items: center;
  padding-left: ${p => p.$pad ?? 0}px;
  gap: ${p => p.$gap || 0}px;
  white-space: nowrap;
`;
const Box = styled.span<{ $clear?: boolean }>`
  width: 13px;
  height: 14px;
  display: flex;
  align-items: center;
  justify-content: center;
  background: ${p => (p.$clear ? 'none' : '#00000038')};
`;
const LabelChip = styled.button`
  width: 12px;
  height: 13px;
  background: ${c.label};
`;
const Num = styled.b`
  font: bold 13px/16px ${arial};
  padding-top: 1px;
`;
const SrcIcon = styled.span<{ $c?: string }>`
  width: 14px;
  height: 14px;
  flex: none;
  margin: 0 2px;
  text-align: center;
  font: bold 12px/14px "Liberation Serif", serif;
  ${p => p.$c && css`background: ${p.$c}; box-shadow: inset 0 0 0 1px #000;`}
`;
const LayerName = styled.span<{ $on?: boolean; $kr?: boolean }>`
  flex: 1;
  height: 16px;
  overflow: hidden;
  padding-left: 4px;
  margin-right: 2px;
  font: bold ${p => (p.$kr ? 14 : 13)}px/${p => (p.$kr ? 14 : 19)}px ${arial};
  ${p => p.$on && css`background: #a0a0a0; color: #1c1c1c;`}
`;
const HotText = styled.span`
  color: ${c.blue};
  font: 12px/16px ${arial};
  i { color: ${c.text}; font-style: normal; padding: 0 1px; }
`;
const Fx = styled.i`font: italic 13px/14px "Liberation Serif", serif;`;
const PropName = styled.span`font: 12px/16px ${arial}; padding-top: 3px;`;

type Layer = { id: number; name: string; src?: string; on?: boolean; kr?: boolean; open?: boolean; trk?: boolean; parent: string; from: number; to: number };
const layers: Layer[] = [
  { id: 1, name: 'Null 1', src: '#fff', on: true, parent: 'None', from: 0, to: 150 },
  { id: 2, name: '에펙 레시피', kr: true, on: true, trk: true, parent: '1. Null 1', from: 4, to: 58 },
  { id: 3, name: '회전 레시피', kr: true, on: true, trk: true, parent: '1. Null 1', from: 44, to: 150 },
  { id: 4, name: 'Null 1', src: '#fff', open: true, trk: true, parent: 'None', from: 0, to: 150 },
  { id: 5, name: 'Royal B...Solid 1', src: c.solid, trk: true, parent: '4. Null 1', from: 0, to: 150 },
  { id: 6, name: 'Deep Ro...olid 1', src: '#0047a8', trk: true, parent: '4. Null 1', from: 0, to: 150 },
  { id: 7, name: 'Royal B...Solid 1', src: c.solid, trk: true, parent: '4. Null 1', from: 0, to: 150 },
];
const widths = [69, 32, 33, 134, 136, 74, 19, 73, 117, 61, 15];
const dark = '#1c1c1c';

const LayerRow = ({ l }: { l: Layer }) => (
  <Row $kind={l.on ? 'on' : 'off'}>
    <td><Cell $pad={5} $gap={2}><Box><Icon n="eye" s={10} color="#c4c4c4" /></Box><Box $clear /><Box /><Box /></Cell></td>
    <td><Cell $pad={3} $gap={5}><Icon n={l.open ? 'down' : 'right'} s={9} /><LabelChip aria-label="Label colour" /></Cell></td>
    <td><Cell $pad={6}><Num>{l.id}</Num></Cell></td>
    <td><Cell><SrcIcon $c={l.src}>{l.src ? '' : 'T'}</SrcIcon><LayerName $on={l.on} $kr={l.kr}>{l.name}</LayerName></Cell></td>
    <td>
      <Cell $pad={3} $gap={2}>
        <Box $clear><Icon n="shy" s={12} /></Box><Box>{l.kr && <Icon n="sun" s={10} color="#858585" />}</Box><Box><Icon n="slash" s={12} /></Box>
        <Box $clear /><Box $clear /><Box /><Box /><Box $clear><Icon n="cube" s={12} /></Box>
      </Cell>
    </td>
    <td><Cell $pad={3}><Select label={`Mode ${l.id}`} value="Normal" options={['Add', 'Screen']} w={69} h={15} bg={dark} color={c.text} font={ui} /></Cell></td>
    <td><Cell $pad={3}><Box /></Cell></td>
    <td><Cell $pad={3}>{l.trk && <Select label={`Track matte ${l.id}`} value="None" options={['Alpha Matte']} w={65} h={15} bg={dark} color={c.text} font={ui} />}</Cell></td>
    <td><Cell $pad={5} $gap={6}><Icon n="spiral" s={12} /><Select label={`Parent ${l.id}`} value={l.parent} options={['Parent layer']} w={89} h={15} bg={dark} color={c.text} font={ui} /></Cell></td>
    <td><Cell $pad={7}><HotText>100.0%</HotText></Cell></td>
    <td />
  </Row>
);
const PropRow = () => (
  <Row $kind="prop">
    <td><Cell $pad={7} $gap={6}><Icon n="prev" s={8} color="#5a5a5a" /><Icon n="key" s={10} color={c.blue} /><Icon n="next" s={8} color="#c4c4c4" /></Cell></td>
    <td />
    <td><Cell $pad={20}><Icon n="watch" s={12} color={c.blue} /></Cell></td>
    <td><Cell $pad={6} $gap={9}><Icon n="graph" s={11} /><PropName>X Rotation</PropName></Cell></td>
    <td><Cell $pad={4}><HotText>0<i>x</i>-180.0<i>°</i></HotText></Cell></td>
    <td /><td /><td />
    <td><Cell $pad={18}><Icon n="spiral" s={12} /></Cell></td>
    <td /><td />
  </Row>
);
const LayerFoot = styled.footer`
  height: 5px;
  margin-top: auto;
  border-top: 1px solid ${c.line};
  display: flex;
  gap: 11px;
  padding: 2px 0 0 7px;
  span { width: 9px; height: 2px; background: #1f6fb8; }
`;

const Graph = styled.div`
  flex: 1;
  min-width: 0;
  position: relative;
  border-left: 1px solid ${c.line};
  padding-top: 5px;
  display: flex;
  flex-direction: column;
`;
const Strip = styled.div<{ $h: number; $bg: string }>`
  height: ${p => p.$h}px;
  flex: none;
  padding: 0 7px 0 8px;
  border-bottom: 1px solid ${c.line};
  display: flex;
  position: relative;
  > i { flex: 1; background: ${p => p.$bg}; }
`;
const NavStrip = styled(Strip)`border-top: 1px solid ${c.line};`;
const Handle = styled.span<{ $end?: boolean }>`
  position: absolute;
  width: 6px;
  top: 0;
  bottom: 0;
  background: ${c.blue};
  ${p => (p.$end ? 'right: 1px; border-radius: 0 5px 5px 0;' : 'left: 1px; border-radius: 5px 0 0 5px;')}
`;
const Ruler = styled.div`
  height: 20px;
  flex: none;
  padding: 0 7px 0 8px;
  border-bottom: 1px solid ${c.line};
  overflow: hidden;
  font: 11px/16px ${ui};
  color: #999;
`;
const Lane = styled.div`
  position: relative;
  height: 100%;
`;
const Mark = styled.span<{ $major?: boolean }>`
  position: absolute;
  top: 0;
  width: 60px;
  height: 100%;
  margin-left: -30px;
  padding-right: 2px;
  text-align: center;
  &::after {
    content: '';
    position: absolute;
    left: 30px;
    bottom: 0;
    width: 1px;
    height: ${p => (p.$major ? 8 : 5)}px;
    background: #777;
  }
`;
const Cached = styled.span`
  position: absolute;
  top: 0;
  bottom: 0;
  background: #28963a;
`;
const TrackRow = styled.div<{ $kind: 'on' | 'off' | 'prop' }>`
  height: 17px;
  flex: none;
  padding: 0 7px 0 8px;
  border-bottom: 1px solid ${p => (p.$kind === 'on' ? '#2a2a2a' : '#252525')};
  background: ${p => ({ on: '#4e4e4e', off: '#303030', prop: '#323232' }[p.$kind])};
`;
const Bar = styled.span<{ $on?: boolean }>`
  position: absolute;
  top: 0;
  bottom: 0;
  ${p => (p.$on
    ? css`background: linear-gradient(#b25449, #a24a41); border-top: 1px solid #c59c94; border-left: 1px solid #c59c94;`
    : css`background: #7c4038; box-shadow: inset 0 1px #84504a;`)}
`;
const KeyMark = styled.span<{ $end?: boolean }>`
  position: absolute;
  top: 3px;
  margin-left: -5px;
  width: 10px;
  height: 10px;
  color: ${p => (p.$end ? '#8f8f8f' : '#bcbcbc')};
`;
const EmptyTime = styled.div`
  flex: 1;
  margin: 0 7px 7px 8px;
  background: #303030;
`;
const Playhead = styled.div`
  position: absolute;
  left: 2px;
  top: 20px;
  bottom: 4px;
  width: 11px;
  display: flex;
  flex-direction: column;
  align-items: center;
  &::after { content: ''; flex: 1; width: 1px; background: #3f8fdd; }
`;
const EdgeStrip = styled.div`
  width: 13px;
  flex: none;
  color: #b4b4b4;
  padding: 37px 0 0 4px;
  overflow: hidden;
`;
const EdgeSecond = styled.div`
  margin: 4px 0 0 -4px;
  border-top: 1px solid ${c.line};
  border-left: 1px solid ${c.line};
  height: 18px;
  padding-top: 4px;
`;

const at = (f: number) => ({ left: `${(f / 150) * 100}%` });
const span = (a: number, b: number) => ({ left: `${(a / 150) * 100}%`, width: `${((b - a) / 150) * 100}%` });
const cached = [0, 4, 6, 10, 13, 15, 18, 20, 23, 25, 30, 33, 35, 40, 45, 56];
const marks = Array.from({ length: 16 }, (_, i) => i * 10);
const markText = (f: number) => (f === 0 ? '0:00f' : f % 30 === 0 ? `0${f / 30}:00f` : `${f % 30}f`);

const Timeline = () => (
  <Panel>
    <TimeTabs>
      <span>Render Queue</span>
      <OpenTab><CloseX>x</CloseX><TabSwatch $c="#b09b76" /><span>Comp 1</span><Burger label="Timeline menu" /></OpenTab>
    </TimeTabs>
    <TimeBody>
      <LayerSide>
        <TimeCtl>
          <TimeCode>0:00:00:00<small>00000 (30.00 fps)</small></TimeCode>
          <Search label="Search layers" w="453px" />
          <CtlIcons $gap={18} $pad={15}>
            <Icon n="net" s={16} /><Icon n="draft" s={16} />
            <CtlIcons $gap={11}><Icon n="hide" s={16} /><Icon n="film" s={14} /><Icon n="blur" s={14} /></CtlIcons>
            <Icon n="graphEd" s={16} />
          </CtlIcons>
        </TimeCtl>
        <LayerTable>
          <colgroup>{widths.map((w, i) => <col key={i} style={{ width: w }} />)}</colgroup>
          <thead>
            <tr>
              <th><HeadCell $pad={6} $gap={3}><Icon n="eye" s={11} color="#c4c4c4" /><Icon n="sound" s={12} /><Icon n="dot" s={12} color="#c4c4c4" /><Icon n="lock" s={11} /></HeadCell></th>
              <th><HeadCell $pad={13}><Icon n="tag" s={12} /></HeadCell></th>
              <th><HeadCell>#</HeadCell></th>
              <th><HeadCell>Source Name</HeadCell></th>
              <th><HeadCell $pad={3} $gap={3}>{['shy', 'sun', 'quality'].map(n => <Icon key={n} n={n} s={12} />)}<Fx>fx</Fx>{['film', 'blur', 'adjust', 'cube'].map(n => <Icon key={n} n={n} s={12} />)}</HeadCell></th>
              <th><HeadCell $div={false}>Mode</HeadCell></th>
              <th><HeadCell $div={false} $pad={8}>T</HeadCell></th>
              <th><HeadCell>TrkMat</HeadCell></th>
              <th><HeadCell>Parent &amp; Link</HeadCell></th>
              <th><HeadCell>Stretch</HeadCell></th>
              <th />
            </tr>
          </thead>
          <tbody>
            {layers.map(l => <React.Fragment key={l.id}><LayerRow l={l} />{l.open && <PropRow />}</React.Fragment>)}
          </tbody>
        </LayerTable>
        <LayerFoot><span /><span /><span /></LayerFoot>
      </LayerSide>
      <Graph>
        <NavStrip $h={10} $bg="#696969"><i /><Handle /><Handle $end /></NavStrip>
        <Ruler><Lane>{marks.map(f => <Mark key={f} $major={f % 30 === 0} style={at(f)}>{markText(f)}</Mark>)}</Lane></Ruler>
        <Strip $h={16} $bg="#606060"><i /><Handle /><Handle $end /></Strip>
        <Strip $h={4} $bg="transparent"><i><Lane>{cached.map(f => <Cached key={f} style={span(f, f + 1)} />)}<Cached style={span(59, 150)} /></Lane></i></Strip>
        {layers.map(l => (
          <React.Fragment key={l.id}>
            <TrackRow $kind={l.on ? 'on' : 'off'}><Lane><Bar $on={l.on} style={span(l.from, l.to)} /></Lane></TrackRow>
            {l.open && (
              <TrackRow $kind="prop">
                <Lane>{[0, 20, 40, 60].map(f => <KeyMark key={f} $end={f === 60} style={at(f)}><Svg width={10} height={10} viewBox="0 0 10 10"><path d="M0 0h10v2L7 4v2l3 2v2H0V8l3-2V4L0 2z" /></Svg></KeyMark>)}</Lane>
              </TrackRow>
            )}
          </React.Fragment>
        ))}
        <EmptyTime />
        <Playhead><Svg width={11} height={14} viewBox="0 0 11 14" $c={c.blue}><path d="M0 0h11v6L5.500 14 0 6z" /></Svg></Playhead>
      </Graph>
      <EdgeStrip>
        <Icon n="marker" s={13} />
        <EdgeSecond><Svg width={14} height={11} viewBox="0 0 14 11"><path d="M0 6l6-6v3h8v5H6" fill="none" stroke="currentColor" /><path d="M8 3h6v5H8z" /><circle cx="6" cy="8" r="3" fill="#232323" stroke="currentColor" /></Svg></EdgeSecond>
      </EdgeStrip>
    </TimeBody>
  </Panel>
);

/* ---------- dialog ---------- */
const Dialog = styled.form`
  position: absolute;
  left: calc(50% - 125px);
  top: 332px;
  width: 422px;
  background: ${c.panel};
  border: 1px solid #2277c4;
  box-shadow: 0 3px 16px rgba(0, 0, 0, 0.45);
  color: #9a9a9a;
`;
const DialogTitle = styled.header`
  height: 30px;
  background: #0072de;
  color: #e9f3ff;
  display: flex;
  align-items: center;
  justify-content: space-between;
  padding: 0 10px 0 8px;
  font: 12px/16px "Open Sans", sans-serif;
`;
const NameRow = styled.label`
  display: flex;
  align-items: center;
  justify-content: space-between;
  padding: 15px 15px 0 16px;
  input {
    width: 271px;
    height: 20px;
    background: #e8e8e8;
    border: 1px solid #2d7cc9;
    border-radius: 3px;
    color: #111;
    padding: 0 0 2px 6px;
    font: 12px/14px ${ui};
    outline: 0;
  }
  input::selection { background: #0a0a0a; color: #f0f0f0; }
`;
const Choice = styled.label<{ $top: number; $l: number; $off?: boolean }>`
  display: flex;
  align-items: center;
  gap: 3px;
  margin: ${p => p.$top}px 0 0 ${p => p.$l}px;
  height: 14px;
  color: ${p => (p.$off ? '#484848' : 'inherit')};
`;
const Radio = styled.input`
  appearance: none;
  width: 14px;
  height: 14px;
  flex: none;
  border-radius: 50% !important;
  border: 2px solid #484848 !important;
  &:checked { border: 1px solid ${c.panel} !important; background: #959595 !important; }
`;
const Explain = styled.p<{ $off?: boolean }>`
  margin: 1px 40px 0 62px;
  color: ${p => (p.$off ? '#484848' : 'inherit')};
`;
const Actions = styled.div`
  display: flex;
  justify-content: flex-end;
  gap: 10px;
  padding: 23px 15px 15px;
`;
const Pill = styled.button<{ $main?: boolean }>`
  width: 90px;
  height: 20px;
  border-radius: 10px;
  border: ${p => (p.$main ? '1px solid #d8d8d8' : '1px solid #777')};
  color: ${p => (p.$main ? '#e0e0e0' : '#959595')};
`;
const PreCompose = () => {
  const ref = useRef<HTMLInputElement>(null);
  useEffect(() => {
    ref.current?.focus();
    ref.current?.setSelectionRange(2, 3);
  }, []);
  return (
    <Dialog role="dialog" aria-label="Pre-compose" onSubmit={e => e.preventDefault()}>
      <DialogTitle>Pre-compose<IconButton type="button" aria-label="Close"><Icon n="close" s={11} /></IconButton></DialogTitle>
      <NameRow>New composition name:<input ref={ref} defaultValue="텍스트" /></NameRow>
      <Choice $top={26} $l={34} $off><Radio type="radio" name="attrs" disabled />Leave all attributes in 'Comp 1'</Choice>
      <Explain $off>
        Use this option to create a new intermediate composition with only 'Null 1', in it. The new composition will become the source to the current<br />
        layer. This option is not available because more than one layer is<br />
        selected.
      </Explain>
      <Choice $top={25} $l={34}><Radio type="radio" name="attrs" defaultChecked />Move all attributes into the new composition</Choice>
      <Explain>Use this option to place the currently selected layers together into a new intermediate composition.</Explain>
      <Choice $top={11} $l={49}><Tick type="checkbox" />Adjust composition duration to the time span of the selected layers</Choice>
      <Choice $top={10} $l={34}><Tick type="checkbox" />Open New Composition</Choice>
      <Actions><Pill $main>OK</Pill><Pill type="button">Cancel</Pill></Actions>
    </Dialog>
  );
};

/* ---------- page ---------- */
const Upper = styled.main`
  display: grid;
  grid-template-columns: 318px 360px minmax(0, 1fr) 201px;
  gap: 4px;
  min-height: 0;
`;
const Lower = styled.div`
  display: grid;
  grid-template-columns: 204px minmax(0, 1fr);
  gap: 4px;
  padding-top: 4px;
  min-height: 0;
`;
const BottomStrip = styled.div`background: #000;`;

export default function App() {
  return (
    <App_>
      <Global />
      <Top />
      <Upper><Project /><EffectControls /><Composition /><Right /></Upper>
      <Lower><Effects /><Timeline /></Lower>
      <BottomStrip />
      <PreCompose />
    </App_>
  );
}
